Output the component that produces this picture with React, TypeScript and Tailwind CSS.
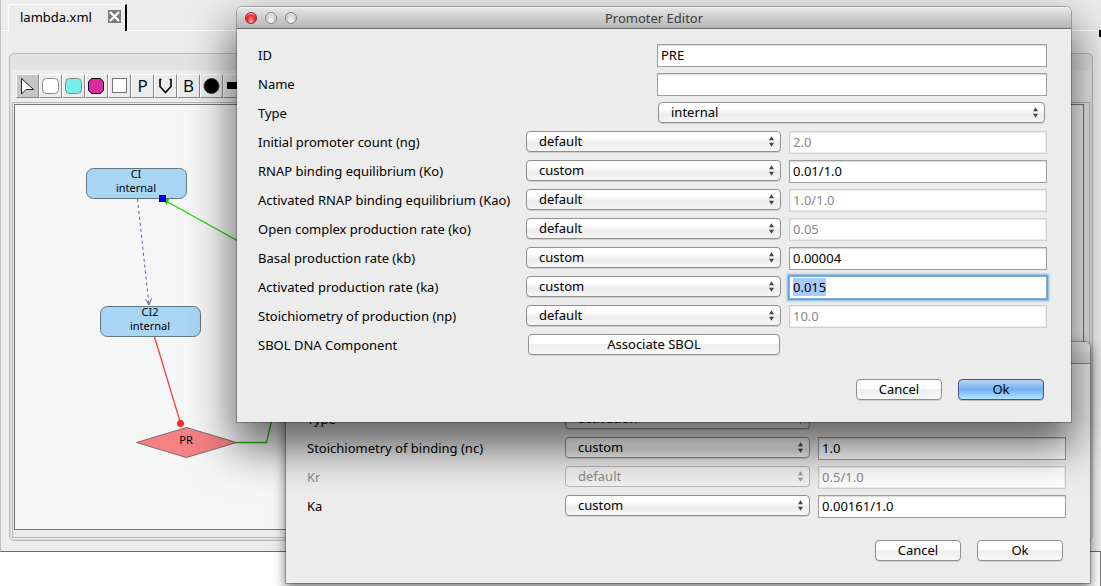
import { useEffect, useId, useRef } from "react";
import type { ReactNode } from "react";
import { clsx } from "clsx";

const buttonBase =
  "h-[21px] rounded-[4px] border pb-px text-center text-[13px] leading-[18px] text-black";
const plainButton =
  "border-[#8f8f8f] bg-linear-to-b from-white from-45% via-[#efefef] via-50% to-[#f7f7f7] shadow-[0_1px_0_rgba(0,0,0,0.12)]";
const defaultButton =
  "border-[#4b4d9e] bg-linear-to-b from-[#b9d3f5] from-0% via-[#6fb0f1] via-50% to-[#b4e6fd] shadow-[0_1px_0_rgba(0,0,0,0.2)]";

function PushButton({
  children,
  primary,
  className,
}: {
  children: ReactNode;
  primary?: boolean;
  className?: string;
}) {
  return (
    <button
      type="button"
      className={clsx(buttonBase, primary ? defaultButton : plainButton, className)}
    >
      {children}
    </button>
  );
}

function Popup({
  id,
  label,
  value,
  options,
  disabled,
  className,
}: {
  id?: string;
  label?: string;
  value: string;
  options: string[];
  disabled?: boolean;
  className?: string;
}) {
  return (
    <span className={clsx("relative block", className)}>
      <select
        id={id}
        aria-label={label}
        defaultValue={value}
        disabled={disabled}
        className={clsx(
          "block h-[21px] w-full appearance-none rounded-[4px] border pr-5 pb-px pl-3 text-[13px] leading-[18px] outline-none",
          disabled
            ? "border-[#b8b8b8] bg-[#f2f2f2] text-[#8a8a8a] opacity-100"
            : "border-[#8f8f8f] bg-linear-to-b from-white from-30% via-[#ececec] via-60% to-[#f5f5f5] text-black shadow-[0_1px_0_rgba(0,0,0,0.12)]",
        )}
      >
        {options.map((o) => (
          <option key={o}>{o}</option>
        ))}
      </select>
      <svg
        width="7"
        height="11"
        viewBox="0 0 7 11"
        aria-hidden="true"
        className={clsx(
          "pointer-events-none absolute top-[5px] right-[6px]",
          disabled ? "fill-[#999]" : "fill-[#444]",
        )}
      >
        <path d="M3.5 0.3 6 4.2H1zM3.5 10.7 1 6.8h5z" />
      </svg>
    </span>
  );
}

function TextField({
  id,
  label,
  value,
  disabled,
  focused,
  className,
}: {
  id?: string;
  label?: string;
  value: string;
  disabled?: boolean;
  focused?: boolean;
  className?: string;
}) {
  const ref = useRef<HTMLInputElement>(null);
  useEffect(() => {
    if (focused) {
      ref.current?.focus();
      ref.current?.select();
    }
  }, [focused]);
  return (
    <input
      ref={ref}
      id={id}
      aria-label={label}
      type="text"
      defaultValue={value}
      disabled={disabled}
      className={clsx(
        "block h-[23px] min-w-0 border bg-white px-[3px] pb-0.5 text-[13px] leading-[18px] outline-none selection:bg-[#a8cbff] selection:text-black",
        disabled
          ? "border-[#d0d0d0] text-[#888] shadow-[inset_0_0_0_1px_#ececec]"
          : focused
            ? "border-[#7fadd9] text-black shadow-[0_0_0_1px_#68a2d8,0_0_2px_2px_#7fb2e0]"
            : "border-[#9d9d9d] text-black shadow-[inset_0_1px_1px_#d8d8d8]",
        className,
      )}
    />
  );
}

type Param = {
  label: string;
  mode: string;
  value: string;
  focused?: boolean;
  dimmed?: boolean;
};

function ParamRow({
  param,
  labelWidth,
}: {
  param: Param;
  labelWidth: string;
}) {
  const id = useId();
  return (
    <div className="flex h-[29px] items-start pt-[3px]">
      <label
        htmlFor={id}
        className={clsx(
          "shrink-0 leading-[23px] whitespace-nowrap",
          labelWidth,
          param.dimmed && "text-[#8a8a8a]",
        )}
      >
        {param.label}
      </label>
      <div className="grid min-w-0 flex-1 grid-cols-[minmax(0,255fr)_minmax(0,258fr)] gap-2">
        <Popup
          id={id}
          value={param.mode}
          options={["default", "custom"]}
          disabled={param.dimmed}
        />
        <TextField
          label={param.label + " value"}
          value={param.value}
          disabled={param.mode === "default"}
          focused={param.focused}
        />
      </div>
    </div>
  );
}

function Light({ closing }: { closing?: boolean }) {
  return (
    <button
      type="button"
      aria-label={closing ? "Close" : "Window control"}
      className={clsx(
        "size-3 rounded-full border",
        closing
          ? "border-[#8f2a2c] bg-radial-[at_50%_85%] from-[#ffb0ae] via-[#f03238] to-[#c8141f] shadow-[inset_0_2px_1px_-1px_rgba(255,255,255,0.8)]"
          : "border-[#858585] bg-radial-[at_50%_85%] from-[#fafafa] via-[#d8d8d8] to-[#bcbcbc] shadow-[inset_0_2px_1px_-1px_rgba(255,255,255,0.8)]",
      )}
    />
  );
}

const promoterParams: Param[] = [
  { label: "Initial promoter count (ng)", mode: "default", value: "2.0" },
  { label: "RNAP binding equilibrium (Ko)", mode: "custom", value: "0.01/1.0" },
  { label: "Activated RNAP binding equilibrium (Kao)", mode: "default", value: "1.0/1.0" },
  { label: "Open complex production rate (ko)", mode: "default", value: "0.05" },
  { label: "Basal production rate (kb)", mode: "custom", value: "0.00004" },
  { label: "Activated production rate (ka)", mode: "custom", value: "0.015", focused: true },
  { label: "Stoichiometry of production (np)", mode: "default", value: "10.0" },
];

const influenceParams: Param[] = [
  { label: "Stoichiometry of binding (nc)", mode: "custom", value: "1.0" },
  { label: "Kr", mode: "default", value: "0.5/1.0", dimmed: true },
  { label: "Ka", mode: "custom", value: "0.00161/1.0" },
];

function PromoterEditor() {
  return (
    <section
      role="dialog"
      aria-labelledby="promoter-title"
      className="absolute top-[7px] right-[30px] left-[237px] rounded-t-[5px] bg-[#ececec] shadow-[0_0_0_1px_rgba(0,0,0,0.25),0_22px_44px_4px_rgba(0,0,0,0.58)]"
    >
      <header className="relative flex h-[22px] items-center gap-2 rounded-t-[5px] border-b border-[#6b6b6b] bg-linear-to-b from-[#e8e8e8] to-[#b5b5b5] px-2 shadow-[inset_0_1px_0_#f4f4f4]">
        <Light closing />
        <Light />
        <Light />
        <h2
          id="promoter-title"
          className="pointer-events-none absolute inset-x-0 text-center text-[13px] leading-[20px] text-[#3c3c3c]"
        >
          Promoter Editor
        </h2>
      </header>
      <form className="pt-3 pr-6 pb-[22px] pl-[21px]">
        <div className="flex h-[29px] items-start pt-[3px]">
          <label htmlFor="pid" className="w-[399px] shrink-0 leading-[23px]">ID</label>
          <TextField id="pid" value="PRE" className="flex-1" />
        </div>
        <div className="flex h-[29px] items-start pt-[3px]">
          <label htmlFor="pname" className="w-[399px] shrink-0 leading-[23px]">Name</label>
          <TextField id="pname" value="" className="flex-1" />
        </div>
        <div className="flex h-[29px] items-start pt-[3px]">
          <label htmlFor="ptype" className="w-[400px] shrink-0 leading-[23px]">Type</label>
          <Popup id="ptype" value="internal" options={["internal"]} className="mr-0.5 flex-1" />
        </div>
        {promoterParams.map((p) => (
          <ParamRow key={p.label} param={p} labelWidth="w-[268px]" />
        ))}
        <div className="flex h-[29px] items-start pt-[3px]">
          <span className="w-[268px] shrink-0 leading-[23px]">SBOL DNA Component</span>
          <div className="grid min-w-0 flex-1 grid-cols-[minmax(0,255fr)_minmax(0,258fr)] gap-2">
            <PushButton className="mr-px ml-0.5">Associate SBOL</PushButton>
          </div>
        </div>
        <div className="flex justify-end gap-4 pt-[19px] pr-[3px]">
          <PushButton className="w-[86px]">Cancel</PushButton>
          <PushButton primary className="w-[86px]">Ok</PushButton>
        </div>
      </form>
    </section>
  );
}

function InfluenceEditor() {
  return (
    <section
      role="dialog"
      aria-label="Influence"
      className="absolute top-[342px] right-[11px] left-[286px] rounded-t-[5px] bg-[#ececec] shadow-[0_0_0_1px_rgba(0,0,0,0.25),0_5px_12px_1px_rgba(0,0,0,0.5)]"
    >
      <header className="h-[22px] rounded-t-[5px] border-b border-[#8a8a8a] bg-linear-to-b from-[#f4f4f4] to-[#d6d6d6]" />
      <form className="pt-[41px] pr-6 pb-[22px] pl-[21px]">
        <div className="flex h-[29px] items-start pt-[3px]">
          <label htmlFor="itype" className="w-[258px] shrink-0 leading-[23px]">Type</label>
          <div className="grid min-w-0 flex-1 grid-cols-[minmax(0,255fr)_minmax(0,258fr)] gap-2">
            <Popup id="itype" value="activation" options={["activation"]} />
          </div>
        </div>
        {influenceParams.map((p) => (
          <ParamRow key={p.label} param={p} labelWidth="w-[258px]" />
        ))}
        <div className="flex justify-end gap-4 pt-[19px] pr-[3px]">
          <PushButton className="w-[86px]">Cancel</PushButton>
          <PushButton className="w-[86px]">Ok</PushButton>
        </div>
      </form>
    </section>
  );
}

const tools: { name: string; icon: ReactNode }[] = [
  {
    name: "Select",
    icon: <path d="M4.5 3.5v15.5l4.5-4.5h7.5z" fill="#fff" stroke="#222" />,
  },
  {
    name: "Species",
    icon: <rect x="2.5" y="3.5" width="16" height="15" rx="4" fill="#fff" stroke="#8a8a8a" />,
  },
  {
    name: "Boundary species",
    icon: <rect x="2.5" y="3.5" width="16" height="15" rx="4" fill="#79ecec" stroke="#8a8a8a" />,
  },
  {
    name: "Component",
    icon: <path d="M5.5 3.5h9l3 3.5v8l-3 3.5h-9l-3-3.5v-8z" fill="#dc2ba0" stroke="#000" />,
  },
  {
    name: "Compartment",
    icon: <rect x="3.5" y="3.5" width="14" height="14" fill="#fff" stroke="#777" />,
  },
  { name: "Promoter", icon: "P" },
  {
    name: "Variable",
    icon: <path d="M6.5 4.5H5v7l5.5 6 5.5-6v-7h-1.5" fill="none" stroke="#000" strokeWidth="1.6" />,
  },
  { name: "Boolean", icon: "B" },
  {
    name: "Reaction",
    icon: <circle cx="10.5" cy="11" r="7.5" fill="#000" stroke="#333" strokeDasharray="2 1" />,
  },
  {
    name: "Transition",
    icon: <rect x="3" y="7" width="16" height="7" fill="#000" />,
  },
];

function Toolbar() {
  return (
    <div role="toolbar" className="flex h-[29px] items-start px-1 pt-1">
      {tools.map((t, i) => (
        <button
          key={t.name}
          type="button"
          aria-label={t.name}
          className={clsx(
            "flex h-6 w-[23px] items-center justify-center border border-t-white border-r-[#8a8a8a] border-b-[#8a8a8a] border-l-white font-['Open_Sans'] text-[17px] leading-none",
            i === 0 ? "bg-[#c6c6c6]" : "bg-[#ececec]",
            typeof t.icon === "string" && "pb-0.5",
          )}
        >
          {typeof t.icon === "string" ? (
            t.icon
          ) : (
            <svg width="22" height="22" viewBox="0 0 22 22" className="shrink-0">
              {t.icon}
            </svg>
          )}
        </button>
      ))}
    </div>
  );
}

function Diagram() {
  return (
    <svg className="block h-full w-full text-[11px]" role="img" aria-label="Model diagram">
      <g transform="translate(-15 -105)">
        <path d="M137.5 199 149 305" stroke="#5560a8" strokeDasharray="3 3" fill="none" />
        <path d="m145.5 299 3.5 6 2.5-6.5" stroke="#5560a8" fill="none" />
        <path d="m166 201 110 61" stroke="#1fd60a" strokeWidth="1.3" />
        <path d="m163 199 7-1-3.5 7z" fill="#23c40c" />
        <path d="m154.5 337 26 86" stroke="#fb3434" strokeWidth="1.2" />
        <path d="M236 442.5h30.5l6-26" stroke="#1fb80a" strokeWidth="1.3" fill="none" />
        <g fill="#a8d5f4" stroke="#63757f">
          <rect x="86.5" y="168.5" width="100" height="30" rx="7" />
          <rect x="100.5" y="306.5" width="100" height="30" rx="7" />
        </g>
        <path d="m136.5 442.5 50-15 50 15-50 15z" fill="#f58282" stroke="#7d6a6a" />
        <circle cx="180.5" cy="423.5" r="3.5" fill="#fb2a2a" />
        <rect x="159.5" y="195.5" width="6" height="6" fill="#00f" stroke="#000" />
        <g textAnchor="middle" fill="#000">
          <text x="136" y="178">CI</text>
          <text x="136" y="192">internal</text>
          <text x="150" y="316">CI2</text>
          <text x="150" y="330">internal</text>
          <text x="186" y="444">PR</text>
        </g>
      </g>
    </svg>
  );
}

export default function App() {
  return (
    <div className="relative flex min-h-screen flex-col overflow-hidden bg-white font-['Noto_Sans','Open_Sans',sans-serif] text-[13px] text-black">
      <main className="flex flex-1 flex-col border-b border-l border-b-[#6a6a6a] border-l-[#c0c0c0] bg-[#ececec] pt-1">
        <div className="flex h-[27px] items-stretch">
          <div className="w-[7px] border-b border-white" />
          <div className="flex items-start justify-between gap-3 rounded-tl-[3px] border-t border-r-2 border-l border-t-white border-r-black border-l-white pr-1 pl-[11px]">
            <span className="w-[76px] leading-[25px]">lambda.xml</span>
            <button type="button" aria-label="Close tab" className="mt-[5px]">
              <svg width="13" height="13" viewBox="0 0 13 13" className="block">
                <rect width="13" height="13" fill="#7c7c7c" />
                <path d="m2 2 9 9M11 2l-9 9" stroke="#fff" strokeWidth="2.4" />
              </svg>
            </button>
          </div>
          <div className="flex-1 border-b border-white" />
          <div className="h-[33px] w-0.5 shrink-0 border-b-[7px] border-black" />
        </div>
        <div className="mt-[22px] mr-2 mb-[10px] ml-2 flex flex-1 flex-col rounded-[5px] border border-[#bdbdbd] bg-[#ececec] px-0.5 pb-0.5 shadow-[inset_0_0_0_1px_#d8d8d8]">
          <div className="h-4 rounded-t-[4px] bg-[#e2e2e2]" />
          <Toolbar />
          <div className="mt-[3px] flex flex-1 flex-col border border-[#b5b5b5] pt-px pr-[5px] pb-[7px] pl-px">
            <div className="relative flex-1 border border-[#777] bg-[#f6f6f6]">
              <div className="absolute inset-0">
                <Diagram />
              </div>
            </div>
          </div>
        </div>
      </main>
      <div className="h-[34px] border-r border-[#777]" />
      <InfluenceEditor />
      <PromoterEditor />
    </div>
  );
}
